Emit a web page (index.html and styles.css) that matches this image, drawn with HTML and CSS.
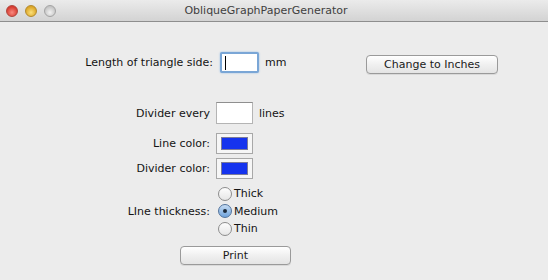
FILE: index.html
```html
<!DOCTYPE html>
<html lang="en">
<head>
    <meta charset="UTF-8">
    <title>ObliqueGraphPaperGenerator</title>
    <link rel="stylesheet" href="styles.css">
</head>
<body>
    <div class="window">
        <div class="titlebar">
            <div class="lights">
                <span class="light red"></span>
                <span class="light yellow"></span>
                <span class="light grey"></span>
            </div>
            <div class="title">ObliqueGraphPaperGenerator</div>
        </div>

        <div class="content">
            <div class="row row-first">
                <label class="label label-first">Length of triangle side:</label>
                <div class="field focused"><span class="caret"></span></div>
                <span class="unit">mm</span>
                <button class="btn btn-inches">Change to Inches</button>
            </div>

            <div class="row row-divider">
                <label class="label">Divider every</label>
                <div class="field"></div>
                <span class="unit">lines</span>
            </div>

            <div class="row row-color">
                <label class="label">Line color:</label>
                <div class="well"><span class="swatch"></span></div>
            </div>

            <div class="row row-color2">
                <label class="label">Divider color:</label>
                <div class="well"><span class="swatch"></span></div>
            </div>

            <div class="row row-thick">
                <label class="label">LIne thickness:</label>
                <div class="radios">
                    <div class="radio"><span class="dot"></span>Thick</div>
                    <div class="radio checked"><span class="dot"></span>Medium</div>
                    <div class="radio"><span class="dot"></span>Thin</div>
                </div>
            </div>

            <div class="row row-print">
                <button class="btn btn-print">Print</button>
            </div>
        </div>
    </div>
</body>
</html>
```

FILE: styles.css
```css
body {
    margin: 0;
    padding: 0;
    font-family: 'DejaVu Sans', sans-serif;
    font-size: 11px;
    color: #141414;
    background-color: #ececec;
}

.window {
    width: 548px;
    height: 280px;
    background-color: #ececec;
    overflow: hidden;
}

.titlebar {
    height: 22px;
    background: linear-gradient(#ebebeb, #d3d3d3);
    border-bottom: 1px solid #8e8e8e;
    display: flex;
    align-items: center;
    box-sizing: border-box;
}

.lights {
    display: flex;
    gap: 7px;
    padding-left: 6px;
    width: 150px;
}

.light {
    width: 12px;
    height: 12px;
    border-radius: 50%;
    box-sizing: border-box;
}

.red {
    background: radial-gradient(circle at 50% 65%, #f98a80, #d63b30 70%);
    border: 1px solid #b0453c;
}

.yellow {
    background: radial-gradient(circle at 50% 65%, #fbe07a, #dba527 70%);
    border: 1px solid #b38a2c;
}

.grey {
    background: radial-gradient(circle at 50% 65%, #f2f2f2, #c4c4c4 70%);
    border: 1px solid #a3a3a3;
}

.title {
    flex: 1;
    padding-right: 172px;
    text-align: center;
    font-size: 11px;
    color: #3f3f3f;
}

.row {
    display: flex;
    align-items: center;
}

.label {
    width: 210px;
    text-align: right;
    margin-right: 6px;
    flex-shrink: 0;
}

.label-first {
    width: 213px;
    margin-right: 7px;
}

.row-first {
    margin-top: 30px;
    height: 21px;
}

.field {
    width: 37px;
    height: 22px;
    background: #fff;
    border: 1px solid #b4b4b4;
    border-top-color: #8f8f8f;
    box-sizing: border-box;
    position: relative;
}

.focused {
    width: 39px;
    height: 21px;
    border: 2px solid #7aa6d6;
    border-radius: 2px;
    box-shadow: 0 0 2px #8fb8e4;
}

.caret {
    position: absolute;
    left: 3px;
    top: 2px;
    width: 1px;
    height: 14px;
    background: #000;
}

.unit {
    margin-left: 6px;
}

.btn {
    font-family: 'DejaVu Sans', sans-serif;
    font-size: 11px;
    color: #1a1a1a;
    background: linear-gradient(#ffffff, #f0f0f0 50%, #e4e4e4);
    border: 1px solid #9a9a9a;
    border-radius: 4px;
    height: 19px;
    padding: 0;
    box-shadow: 0 1px 0 rgba(0, 0, 0, 0.08);
}

.btn-inches {
    width: 132px;
    margin-left: auto;
    margin-right: 50px;
    margin-top: 4px;
}

.row-divider {
    margin-top: 29px;
}

.row-color {
    margin-top: 9px;
}

.row-color2 {
    margin-top: 4px;
}

.well {
    width: 37px;
    height: 21px;
    border: 1px solid #a8a8a8;
    background: #f6f6f6;
    box-sizing: border-box;
    padding: 3px 4px;
}

.swatch {
    display: block;
    height: 100%;
    background: #1533ee;
    border: 1px solid #7a7a9a;
    box-sizing: border-box;
}

.row-thick {
    margin-top: 6px;
}

.radios {
    display: flex;
    flex-direction: column;
    margin-left: 2px;
}

.radio {
    display: flex;
    align-items: center;
    height: 17.5px;
}

.dot {
    width: 14px;
    height: 14px;
    border-radius: 50%;
    border: 1px solid #8c8c8c;
    background: linear-gradient(#fdfdfd, #e6e6e6);
    box-sizing: border-box;
    margin-right: 2px;
    position: relative;
}

.checked .dot {
    background: linear-gradient(#c6dcf3, #6fa3dc);
    border-color: #52739c;
}

.checked .dot::after {
    content: '';
    position: absolute;
    left: 4px;
    top: 4px;
    width: 4px;
    height: 4px;
    border-radius: 50%;
    background: #1c2a3a;
}

.row-print {
    margin-top: 8px;
    padding-left: 180px;
}

.btn-print {
    width: 111px;
}
```
